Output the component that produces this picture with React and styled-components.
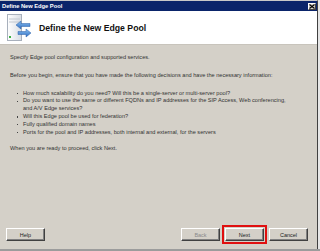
import React from "react";
import styled, { createGlobalStyle } from "styled-components";

const GlobalStyle = createGlobalStyle`
  html, body {
    margin: 0;
    padding: 0;
    background: #e6e6e6;
  }
  body {
    font-family: "Liberation Sans", Arial, sans-serif;
  }
`;

const bullets = [
  "How much scalability do you need? Will this be a single-server or multi-server pool?",
  "Do you want to use the same or different FQDNs and IP addresses for the SIP Access, Web conferencing,\nand A/V Edge services?",
  "Will this Edge pool be used for federation?",
  "Fully qualified domain names",
  "Ports for the pool and IP addresses, both internal and external, for the servers",
];

const App = () => {
  return (
    <>
      <GlobalStyle />
      <Frame>
        <Window>
          <TitleBar>
            <TitleText>Define New Edge Pool</TitleText>
            <CloseBtn>
              <svg width="6" height="5" viewBox="0 0 6 5">
                <path d="M0.5 0.5 L5.5 4.5 M5.5 0.5 L0.5 4.5" stroke="#000" strokeWidth="1.1" />
              </svg>
            </CloseBtn>
          </TitleBar>
          <Header>
            <PoolIcon />
            <HeaderTitle>Define the New Edge Pool</HeaderTitle>
          </Header>
          <Body>
            <Para>Specify Edge pool configuration and supported services.</Para>
            <Para>
              Before you begin, ensure that you have made the following decisions and have the necessary information:
            </Para>
            <List>
              {bullets.map((b, i) => (
                <Item key={i}>{b}</Item>
              ))}
            </List>
            <Para>When you are ready to proceed, click Next.</Para>
          </Body>
          <Footer>
            <Button>Help</Button>
            <Spacer />
            <Button disabled>Back</Button>
            <Highlight>
              <Button>Next</Button>
            </Highlight>
            <Button>Cancel</Button>
          </Footer>
        </Window>
        <BottomBand />
      </Frame>
    </>
  );
};

const PoolIcon = () => (
  <svg width="26" height="28" viewBox="0 0 26 28">
    <defs>
      <linearGradient id="srv" x1="0" x2="1" y1="0" y2="0">
        <stop offset="0" stopColor="#ffffff" />
        <stop offset="1" stopColor="#d8dde4" />
      </linearGradient>
      <linearGradient id="arr" x1="0" x2="0" y1="0" y2="1">
        <stop offset="0" stopColor="#8cc0f0" />
        <stop offset="1" stopColor="#2f6fc4" />
      </linearGradient>
    </defs>
    <rect x="1.5" y="0.5" width="14" height="26" fill="url(#srv)" stroke="#a8b0bc" />
    <line x1="3" y1="5" x2="14" y2="5" stroke="#c2c8d0" />
    <line x1="3" y1="8" x2="14" y2="8" stroke="#c2c8d0" />
    <rect x="3" y="22" width="2" height="2" fill="#3cb043" />
    <path d="M10 11 L15 7 L15 9.5 L24 9.5 L24 12.5 L15 12.5 L15 15 Z" fill="url(#arr)" stroke="#2a5ea8" strokeWidth="0.5" />
    <path d="M25 19 L20 15 L20 17.5 L12 17.5 L12 20.5 L20 20.5 L20 23 Z" fill="url(#arr)" stroke="#2a5ea8" strokeWidth="0.5" />
  </svg>
);

const Frame = styled.div`
  width: 320px;
  height: 251px;
  display: flex;
  flex-direction: column;
  overflow: hidden;
`;

const Window = styled.div`
  width: 317px;
  flex: 1;
  display: flex;
  flex-direction: column;
  background: #d4d0c8;
  border-right: 1px solid #404040;
  border-top: 1px solid #c8c8c8;
  min-height: 0;
`;

const TitleBar = styled.div`
  height: 10px;
  background: #0a246a;
  display: flex;
  align-items: center;
  padding: 0 1px 0 2px;
`;

const TitleText = styled.span`
  flex: 1;
  color: #fff;
  font-weight: bold;
  font-size: 5.8px;
  letter-spacing: -0.05px;
`;

const CloseBtn = styled.div`
  width: 8px;
  height: 7px;
  background: #d4d0c8;
  border: 1px solid;
  border-color: #fff #404040 #404040 #fff;
  box-sizing: border-box;
  display: flex;
  align-items: center;
  justify-content: center;
`;

const Header = styled.div`
  height: 33px;
  background: #fff;
  display: flex;
  align-items: center;
  gap: 7px;
  padding-left: 6px;
  border-bottom: 1px solid #c8c4bc;
`;

const HeaderTitle = styled.div`
  font-size: 8.7px;
  font-weight: bold;
  color: #111;
  margin-top: 1px;
`;

const Body = styled.div`
  flex: 1;
  padding: 9px 8px 0 10px;
  font-size: 5.6px;
  line-height: 7.8px;
  color: #333;
`;

const Para = styled.p`
  margin: 0 0 10px 0;
`;

const List = styled.ul`
  margin: 0 0 9px 0;
  padding: 0 0 0 13px;
  list-style: none;
`;

const Item = styled.li`
  position: relative;
  white-space: pre-line;
  &::before {
    content: "";
    position: absolute;
    left: -6px;
    top: 3.4px;
    width: 1.2px;
    height: 1.2px;
    background: #444;
  }
`;

const Footer = styled.div`
  display: flex;
  align-items: center;
  gap: 3px;
  padding: 0 9px 5px 6px;
`;

const Spacer = styled.div`
  flex: 1;
`;

const Button = styled.button`
  width: 39px;
  height: 13px;
  box-sizing: border-box;
  padding: 0;
  background: #d4d0c8;
  border: 1px solid;
  border-color: #fff #404040 #404040 #fff;
  box-shadow: inset -1px -1px 0 #808080;
  font-family: "Liberation Sans", Arial, sans-serif;
  font-size: 5.5px;
  color: ${(p) => (p.disabled ? "#8a8a8a" : "#222")};
`;

const Highlight = styled.div`
  display: flex;
  padding: 1px;
  border: 2px solid #e01010;
  margin: 0 -1px;
`;

const BottomBand = styled.div`
  height: 2px;
  background: #9c9c9c;
`;

export default App;
